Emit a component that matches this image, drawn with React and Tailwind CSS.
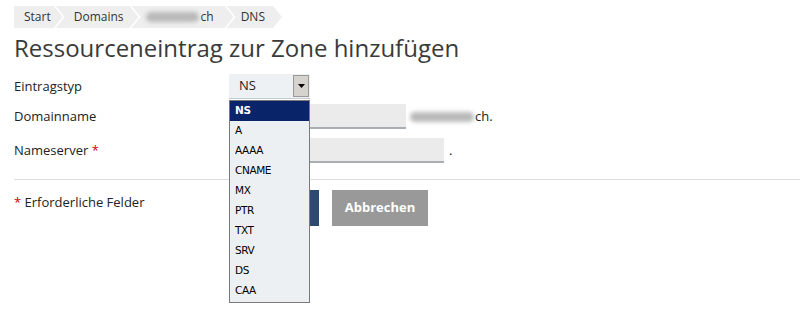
import React from 'react';

const crumb =
  '[clip-path:polygon(0_0,calc(100%-9px)_0,100%_50%,calc(100%-9px)_100%,0_100%,9px_50%)]';
const crumbFirst =
  '[clip-path:polygon(0_0,calc(100%-9px)_0,100%_50%,calc(100%-9px)_100%,0_100%)]';

// Verschwommener Domainname (wie im Screenshot unkenntlich)
const Blurred = ({ w }) => (
  <span className={`inline-block h-[10px] rounded-full bg-[#b9b9b9] blur-[2px] ${w}`} />
);

const Breadcrumb = () => (
  <div className="flex h-[22px] items-stretch text-[12px] text-[#333]">
    <div className={`flex items-center bg-[#eeeeee] pl-[10px] pr-[12px] ${crumbFirst}`}>Start</div>
    <div className={`-ml-[7px] flex items-center bg-[#eeeeee] pl-[18px] pr-[15px] ${crumb}`}>Domains</div>
    <div className={`-ml-[7px] flex items-center bg-[#eeeeee] pl-[14px] pr-[20px] ${crumb}`}>
      <Blurred w="w-[53px] mr-[2px]" />
      ch
    </div>
    <div className={`-ml-[7px] flex items-center bg-[#eeeeee] pl-[14px] pr-[17px] ${crumb}`}>DNS</div>
  </div>
);

const options = ['NS', 'A', 'AAAA', 'CNAME', 'MX', 'PTR', 'TXT', 'SRV', 'DS', 'CAA'];

const Dropdown = () => (
  <div className="absolute left-[229px] top-[100px] w-[81px] border border-[#7a7a7a] bg-[#edf0f3] pb-[1px] font-['DejaVu_Sans',sans-serif] text-[10.5px] tracking-[-0.4px] text-black">
    {options.map((o, i) => (
      <div
        key={o}
        className={`flex h-[20px] items-center pl-[5px] ${i === 0 ? 'bg-[#0a246a] font-bold text-white' : ''}`}
      >
        {o}
      </div>
    ))}
  </div>
);

const Label = ({ children, required }) => (
  <div className="w-[215px] shrink-0 text-[13px] text-[#222]">
    {children}
    {required && <span className="text-[#d40000]"> *</span>}
  </div>
);

export default function App() {
  return (
    <div className="relative h-[313px] w-[800px] overflow-hidden bg-white font-['Open_Sans',sans-serif] text-[#333]">
      <div className="pl-[14px] pt-[6px]">
        <Breadcrumb />
        <h1 className="mt-[2px] text-[24px] leading-[36px] text-[#3a3a3a]">
          Ressourceneintrag zur Zone hinzufügen
        </h1>

        <div className="mt-[8px] flex h-[25px] items-center">
          <Label>Eintragstyp</Label>
          <div className="flex h-[25px] w-[81px] items-center justify-between border-b border-[#c8ccd0] bg-[#eef1f4] pl-[10px] pr-[1px]">
            <span className="text-[13px] text-[#222]">NS</span>
            <span className="flex h-[22px] w-[16px] items-center justify-center border border-[#9a9a9a] bg-[#d6d3ce]">
              <svg width="7" height="4" viewBox="0 0 7 4">
                <path d="M0 0h7L3.5 4z" fill="#000" />
              </svg>
            </span>
          </div>
        </div>

        <div className="mt-[5px] flex h-[25px] items-center">
          <Label>Domainname</Label>
          <div className="h-[25px] w-[177px] border-b-2 border-[#a9aeb3] bg-[#ebebeb]" />
          <span className="ml-[4px] flex items-center text-[13px] text-[#222]">
            <Blurred w="w-[64px] mr-[1px]" />
            ch.
          </span>
        </div>

        <div className="mt-[9px] flex h-[25px] items-center">
          <Label required>Nameserver</Label>
          <div className="h-[25px] w-[215px] border-b-2 border-[#a9aeb3] bg-[#ebebeb]" />
          <span className="ml-[5px] text-[13px] text-[#222]">.</span>
        </div>
      </div>

      <div className="ml-[14px] mt-[16px] border-t border-[#dddddd]" />

      <div className="mt-[10px] flex items-start pl-[14px]">
        <div className="w-[215px] shrink-0 pt-[3px] text-[13px] text-[#222]">
          <span className="text-[#d40000]">*</span> Erforderliche Felder
        </div>
        {/* Speichern-Button liegt unter der offenen Auswahlliste */}
        <button className="h-[36px] w-[90px] bg-[#2b4c6f]" aria-label="Speichern" />
        <button className="ml-[13px] h-[36px] w-[96px] bg-[#999999] text-[13px] font-bold text-white">
          Abbrechen
        </button>
      </div>

      <Dropdown />
    </div>
  );
}
